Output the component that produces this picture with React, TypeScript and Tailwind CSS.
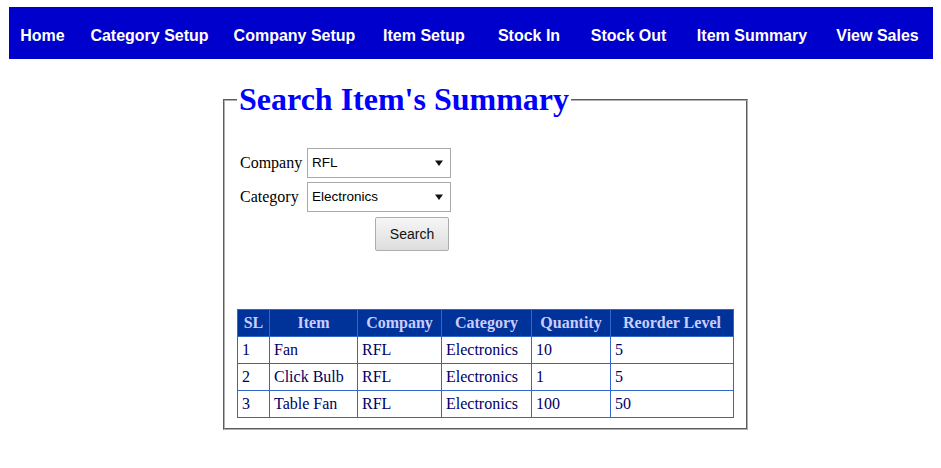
const navLinks = [
  { label: 'Home', w: 'w-[67px]' },
  { label: 'Category Setup', w: 'w-[147px]' },
  { label: 'Company Setup', w: 'w-[143px]' },
  { label: 'Item Setup', w: 'w-[116px]' },
  { label: 'Stock In', w: 'w-[94px]' },
  { label: 'Stock Out', w: 'w-[105px]' },
  { label: 'Item Summary', w: 'w-[142px]' },
  { label: 'View Sales', w: 'w-[109px]' },
];

const rows = [
  { sl: 1, item: 'Fan', company: 'RFL', category: 'Electronics', qty: 10, reorder: 5 },
  { sl: 2, item: 'Click Bulb', company: 'RFL', category: 'Electronics', qty: 1, reorder: 5 },
  { sl: 3, item: 'Table Fan', company: 'RFL', category: 'Electronics', qty: 100, reorder: 50 },
];

const FakeSelect = ({ value }: { value: string }) => {
  return (
    <div className='flex items-center justify-between w-[144px] h-[30px] border border-[#a9a9a9] bg-white pl-[4px] pr-[7px] text-[13.5px] text-black font-["Liberation_Sans",Arial,sans-serif]'>
      <span>{value}</span>
      <svg width="8" height="8" viewBox="0 0 8 8"><path d="M0 1.5 L8 1.5 L4 7 Z" fill="#111" /></svg>
    </div>
  );
};

export default function App() {
  return (
    <div className='min-h-[468px] bg-white font-["Liberation_Serif","Times_New_Roman",serif]'>
      {/* top menu */}
      <div className='pt-[7px] pl-[9px] pr-[8px]'>
        <nav className='flex items-center h-[52px] pt-[5px] bg-[#0000cc]'>
          {navLinks.map((l) => (
            <a key={l.label} href="#" className={`${l.w} text-center text-white font-bold text-[16px] font-["Comic_Sans_MS","Liberation_Sans",Arial,sans-serif]`}>
              {l.label}
            </a>
          ))}
        </nav>
      </div>

      {/* search box */}
      <fieldset className='ml-[223px] mt-[22px] w-[523px] h-[349px] border-2 [border-style:groove] border-[#b0b0b0] px-[12px]'>
        <legend className='px-[2px] text-[32px] font-bold text-[#0000ff] leading-[37px]'>Search Item's Summary</legend>

        <div className='mt-[30px] grid grid-cols-[70px_auto] gap-y-[4px] items-center text-[16px] text-black'>
          <span className='pl-[3px]'>Company</span>
          <FakeSelect value="RFL" />
          <span className='pl-[3px]'>Category</span>
          <FakeSelect value="Electronics" />
        </div>
        <button className='ml-[138px] mt-[5px] w-[74px] h-[34px] border border-[#adadad] rounded-[2px] bg-gradient-to-b from-[#f6f6f6] to-[#dddddd] text-[14px] text-[#111] font-["Liberation_Sans",Arial,sans-serif]'>
          Search
        </button>

        <table className='mt-[58px] w-[496px] table-fixed border-collapse text-[16px]'>
          <thead>
            <tr className='h-[27px] bg-[#003399] text-[#ccccff]'>
              <th className='w-[32px] border border-[#3366cc] font-bold'>SL</th>
              <th className='w-[88px] border border-[#3366cc] font-bold'>Item</th>
              <th className='w-[84px] border border-[#3366cc] font-bold'>Company</th>
              <th className='w-[90px] border border-[#3366cc] font-bold'>Category</th>
              <th className='w-[79px] border border-[#3366cc] font-bold'>Quantity</th>
              <th className='w-[123px] border border-[#3366cc] font-bold'>Reorder Level</th>
            </tr>
          </thead>
          <tbody className='text-[#000066]'>
            {rows.map((r) => (
              <tr key={r.sl} className='h-[27px]'>
                <td className='border border-[#3366cc] px-[4px]'>{r.sl}</td>
                <td className='border border-[#3366cc] px-[4px]'>{r.item}</td>
                <td className='border border-[#3366cc] px-[4px]'>{r.company}</td>
                <td className='border border-[#3366cc] px-[4px]'>{r.category}</td>
                <td className='border border-[#3366cc] px-[4px]'>{r.qty}</td>
                <td className='border border-[#3366cc] px-[4px]'>{r.reorder}</td>
              </tr>
            ))}
          </tbody>
        </table>
      </fieldset>
    </div>
  );
}
